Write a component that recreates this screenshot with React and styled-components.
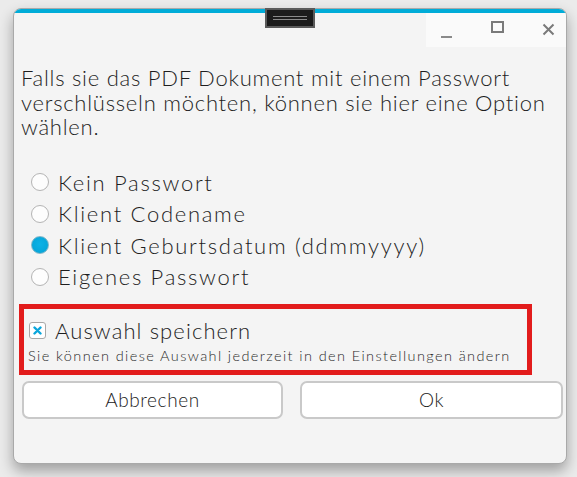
import React, { useState } from 'react'
import styled, { createGlobalStyle } from 'styled-components'

const GlobalStyle = createGlobalStyle`
  html, body {
    margin: 0;
    padding: 0;
    background: #ebebeb;
  }
  body {
    font-family: Lato, "Noto Sans", sans-serif;
    font-weight: 300;
    color: #222;
  }
`

const Stage = styled.div`
  width: 577px;
  height: 477px;
  padding: 8px 0 0 13px;
  box-sizing: border-box;
  overflow: hidden;
`

const Frame = styled.div`
  position: relative;
  width: 554px;
  height: 456px;
`

const Window = styled.div`
  width: 100%;
  height: 100%;
  box-sizing: border-box;
  border: 1px solid #a9a9a9;
  border-radius: 8px;
  background: #f4f4f4;
  overflow: hidden;
  display: flex;
  flex-direction: column;
  box-shadow: 0 7px 14px rgba(0, 0, 0, 0.32);
`

const AccentBar = styled.div`
  height: 4px;
  background: #00acd8;
  flex-shrink: 0;
`

const TitleBar = styled.div`
  height: 34px;
  display: flex;
  justify-content: flex-end;
  flex-shrink: 0;
`

const Controls = styled.div`
  width: 140px;
  background: #fafafa;
  display: flex;
  align-items: center;
  padding-left: 14px;
  gap: 38px;
  box-sizing: border-box;
`

const ControlIcon = styled.svg`
  width: 13px;
  height: 13px;
  display: block;
  margin-top: ${({ $offset }) => $offset || 0}px;
`

const DragHandle = styled.div`
  position: absolute;
  top: 0;
  left: 50%;
  transform: translateX(-50%);
  width: 50px;
  height: 20px;
  box-sizing: border-box;
  background: #1c1c1c;
  border: 2px solid #5a5a5a;
  display: flex;
  flex-direction: column;
  align-items: center;
  justify-content: center;
  gap: 2px;
  &::before, &::after {
    content: '';
    width: 34px;
    height: 1px;
    background: #8a8a8a;
  }
`

const Content = styled.div`
  display: flex;
  flex-direction: column;
  padding: 19px 3px 0 7px;
`

const Intro = styled.p`
  margin: 0;
  font-size: 22px;
  line-height: 24.5px;
  letter-spacing: 0.75px;
  white-space: nowrap;
  color: #1e1e1e;
`

const RadioList = styled.div`
  display: flex;
  flex-direction: column;
  margin: 27px 0 0 10px;
`

const RadioRow = styled.label`
  height: 31.5px;
  display: flex;
  align-items: center;
  gap: 9px;
  font-size: 22px;
  letter-spacing: 1.7px;
  color: #1e1e1e;
  cursor: pointer;
`

const RadioDot = styled.span`
  width: 18px;
  height: 18px;
  box-sizing: border-box;
  border-radius: 50%;
  flex-shrink: 0;
  border: 1px solid ${({ $checked }) => ($checked ? '#7fb6c8' : '#b4b4b4')};
  background: ${({ $checked }) =>
    $checked ? 'radial-gradient(circle at 50% 45%, #0db2e6 0%, #06a6da 70%, #0596c8 100%)' : '#fdfdfd'};
`

const SaveBox = styled.div`
  margin: 11px 0 0 -2px;
  width: 513px;
  height: 71px;
  box-sizing: border-box;
  border: 5px solid #e21c1c;
  padding: 10px 0 0 4px;
  display: flex;
  flex-direction: column;
`

const CheckRow = styled.label`
  display: flex;
  align-items: center;
  gap: 9px;
  font-size: 22px;
  line-height: 24px;
  letter-spacing: 1.1px;
  color: #1e1e1e;
`

const CheckSquare = styled.span`
  width: 17px;
  height: 17px;
  box-sizing: border-box;
  border: 1.5px solid #a8a8a8;
  border-radius: 3px;
  background: #fff;
  display: flex;
  align-items: center;
  justify-content: center;
  flex-shrink: 0;
  margin-left: 1px;
`

const Hint = styled.div`
  font-size: 14.5px;
  line-height: 18px;
  letter-spacing: 1.4px;
  color: #2a2a2a;
  margin-top: 4px;
`

const Buttons = styled.div`
  display: grid;
  grid-template-columns: 261px 263px;
  gap: 17px;
  margin-top: 6px;
  padding-left: 1px;
`

const Button = styled.button`
  height: 38px;
  border: 2px solid #c9c9c9;
  border-radius: 7px;
  background: #fff;
  font-family: Lato, "Noto Sans", sans-serif;
  font-weight: 300;
  font-size: 19px;
  letter-spacing: 0.6px;
  color: #222;
  cursor: pointer;
`

const options = [
  'Kein Passwort',
  'Klient Codename',
  'Klient Geburtsdatum (ddmmyyyy)',
  'Eigenes Passwort',
]

export default function App() {
  const [selected, setSelected] = useState(2)

  return (
    <Stage>
      <GlobalStyle />
      <Frame>
        <Window>
          <AccentBar />
          <TitleBar>
            <Controls>
              <ControlIcon viewBox="0 0 13 13" $offset={4}>
                <line x1="1" y1="11" x2="12" y2="11" stroke="#8a8a8a" strokeWidth="2" />
              </ControlIcon>
              <ControlIcon viewBox="0 0 13 13" $offset={-5}>
                <rect x="1" y="1" width="11" height="10" fill="none" stroke="#7a7a7a" strokeWidth="2" />
              </ControlIcon>
              <ControlIcon viewBox="0 0 13 13" $offset={-1}>
                <path d="M1.5 1.5 L11.5 11.5 M11.5 1.5 L1.5 11.5" stroke="#7a7a7a" strokeWidth="2" />
              </ControlIcon>
            </Controls>
          </TitleBar>
          <Content>
            <Intro>
              Falls sie das PDF Dokument mit einem Passwort
              <br />
              verschlüsseln möchten, können sie hier eine Option
              <br />
              wählen.
            </Intro>
            <RadioList>
              {options.map((o, i) => (
                <RadioRow key={o} onClick={() => setSelected(i)}>
                  <RadioDot $checked={selected === i} />
                  {o}
                </RadioRow>
              ))}
            </RadioList>
            <SaveBox>
              <CheckRow>
                <CheckSquare>
                  <svg width="9" height="9" viewBox="0 0 9 9">
                    <path d="M1.5 1.5 L7.5 7.5 M7.5 1.5 L1.5 7.5" stroke="#0aa6dc" strokeWidth="2.4" strokeLinecap="round" />
                  </svg>
                </CheckSquare>
                Auswahl speichern
              </CheckRow>
              <Hint>Sie können diese Auswahl jederzeit in den Einstellungen ändern</Hint>
            </SaveBox>
            <Buttons>
              <Button>Abbrechen</Button>
              <Button>Ok</Button>
            </Buttons>
          </Content>
        </Window>
        <DragHandle />
      </Frame>
    </Stage>
  )
}
